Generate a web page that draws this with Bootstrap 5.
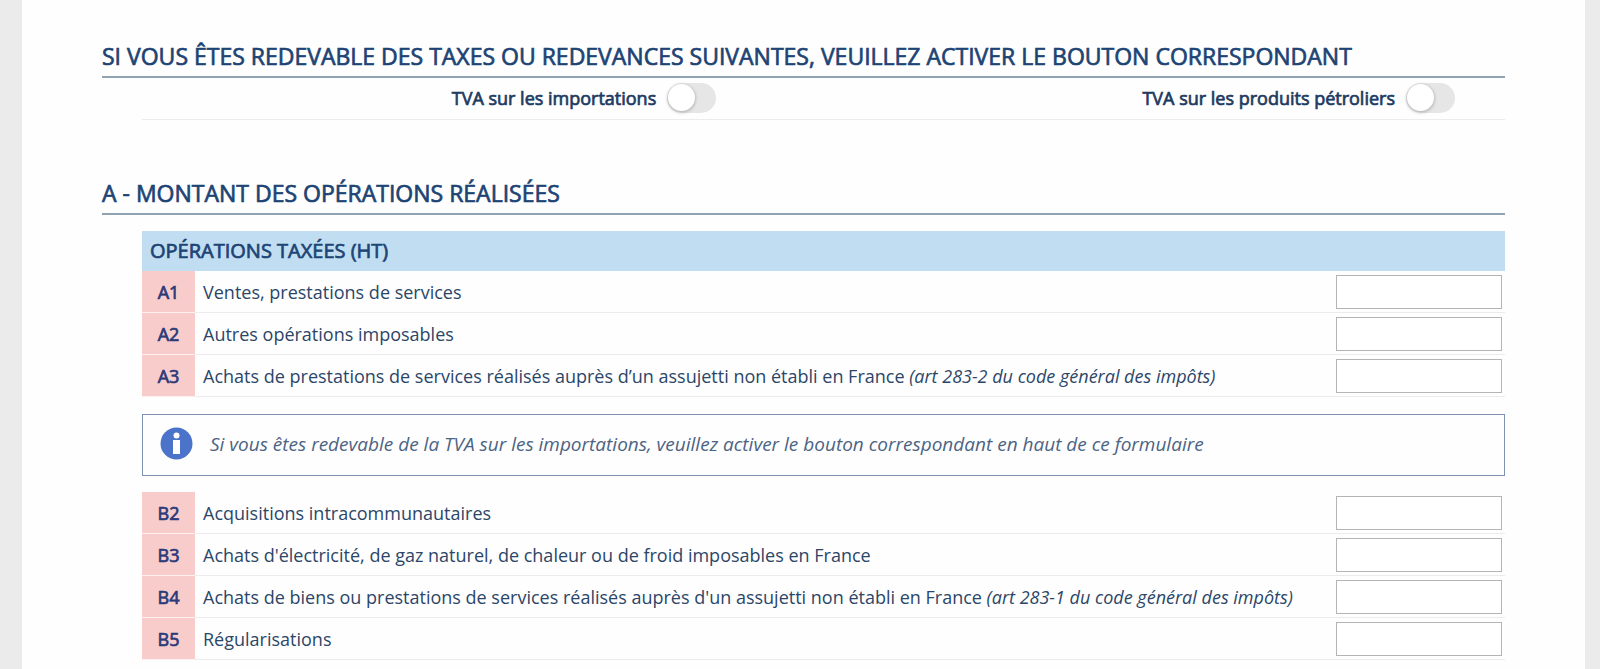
<!DOCTYPE html>
<html lang="fr">
<head>
<meta charset="utf-8">
<meta name="viewport" content="width=device-width, initial-scale=1">
<title>Déclaration de TVA</title>
<link href="https://cdn.jsdelivr.net/npm/bootstrap@5.3.0/dist/css/bootstrap.min.css" rel="stylesheet">
<style>
  body { background: #ebebeb; color: #2b4668; font-family: "Open Sans", sans-serif; font-size: 18px; line-height: 24px; }
  .sheet { background: #fefefe; margin: 0 15px 0 22px; padding: 38px 80px 8px; min-height: 100vh; }
  .faux-bold { font-weight: 400; -webkit-text-stroke: 0.7px currentColor; }
  .section-title { font-size: 23px; line-height: 36px; padding-bottom: 2px; margin: 0; border-bottom: 2px solid #8fa3b2; color: #1d4474; }
  .section-body { margin-left: 40px; }
  .toggles { height: 42px; border-bottom: 1px solid #ececec; margin-bottom: 55px; }
  .toggles > div { padding: 0 50px 2px 0; gap: 11px; }
  .toggle-first { width: 45.8%; }
  .toggles label { color: #1d3a60; }
  .toggles .form-check-input {
    width: 49px; height: 30px; margin: 0; border: 0; border-radius: 15px; background: #e6e6e6; appearance: none; position: relative; float: none;
  }
  .toggles .form-check-input::before {
    content: ""; position: absolute; left: 1px; top: 1px; width: 27px; height: 27px; border-radius: 50%; background: #fff; box-shadow: 0 1px 3px 1px rgba(0,0,0,.18);
  }
  .toggles .form-check-input:checked { background: #4a73c9; }
  .toggles .form-check-input:checked::before { left: 21px; }
  .lines { width: 100%; border-collapse: separate; border-spacing: 0; }
  .lines caption { caption-side: top; background: #c1ddf2; color: #1d4474; font-size: 20px; line-height: 40px; padding: 0 8px; }
  .lines th, .lines td { height: 42px; padding: 0; border-bottom: 1px solid #ebebeb; vertical-align: middle; }
  .lines th { width: 53px; background: #f9cccc; color: #2b3a78; text-align: center; border-bottom-color: #fdf0f0; }
  .lines td { padding-left: 8px; }
  .lines td:last-child { width: 177px; padding: 0 3px 0 8px; }
  .lines .form-control { height: 34px; border: 1px solid #b4b4b8; border-radius: 0; background: #fff; padding: 0 6px; text-align: right; color: inherit; }
  .notice { font-size: 19px; font-style: italic; border: 1px solid #7d93b0; padding: 0 17px 3px; min-height: 62px; gap: 17px; margin: 17px 0 16px; color: #4c6484; }
</style>
</head>
<body>
<main class="sheet">
  <form>
    <section>
      <h2 class="section-title faux-bold">SI VOUS ÊTES REDEVABLE DES TAXES OU REDEVANCES SUIVANTES, VEUILLEZ ACTIVER LE BOUTON CORRESPONDANT</h2>
      <div class="section-body toggles d-flex">
        <div class="toggle-first d-flex align-items-center justify-content-end">
          <label class="faux-bold" for="imp">TVA sur les importations</label>
          <input class="form-check-input" type="checkbox" role="switch" id="imp">
        </div>
        <div class="flex-grow-1 d-flex align-items-center justify-content-end">
          <label class="faux-bold" for="pet">TVA sur les produits pétroliers</label>
          <input class="form-check-input" type="checkbox" role="switch" id="pet">
        </div>
      </div>
    </section>

    <section>
      <h2 class="section-title faux-bold">A - MONTANT DES OPÉRATIONS RÉALISÉES</h2>
      <div class="section-body mt-3">
        <table class="lines">
          <caption class="faux-bold">OPÉRATIONS TAXÉES (HT)</caption>
          <tbody>
            <tr><th scope="row" class="faux-bold">A1</th><td><label for="a1">Ventes, prestations de services</label></td><td><input class="form-control" type="text" id="a1"></td></tr>
            <tr><th scope="row" class="faux-bold">A2</th><td><label for="a2">Autres opérations imposables</label></td><td><input class="form-control" type="text" id="a2"></td></tr>
            <tr><th scope="row" class="faux-bold">A3</th><td><label for="a3">Achats de prestations de services réalisés auprès d’un assujetti non établi en France <em>(art 283-2 du code général des impôts)</em></label></td><td><input class="form-control" type="text" id="a3"></td></tr>
          </tbody>
        </table>

        <div class="notice d-flex align-items-center">
          <svg class="flex-shrink-0" width="33" height="33" viewBox="0 0 33 33" aria-hidden="true">
            <circle cx="16.500" cy="16.500" r="16" fill="#4a73c9"/>
            <circle cx="16.500" cy="8.500" r="3" fill="#fff"/>
            <path d="M13 13h7v14h-7z" fill="#fff"/>
          </svg>
          <span>Si vous êtes redevable de la TVA sur les importations, veuillez activer le bouton correspondant en haut de ce formulaire</span>
        </div>

        <table class="lines">
          <tbody>
            <tr><th scope="row" class="faux-bold">B2</th><td><label for="b2">Acquisitions intracommunautaires</label></td><td><input class="form-control" type="text" id="b2"></td></tr>
            <tr><th scope="row" class="faux-bold">B3</th><td><label for="b3">Achats d'électricité, de gaz naturel, de chaleur ou de froid imposables en France</label></td><td><input class="form-control" type="text" id="b3"></td></tr>
            <tr><th scope="row" class="faux-bold">B4</th><td><label for="b4">Achats de biens ou prestations de services réalisés auprès d'un assujetti non établi en France <em>(art 283-1 du code général des impôts)</em></label></td><td><input class="form-control" type="text" id="b4"></td></tr>
            <tr><th scope="row" class="faux-bold">B5</th><td><label for="b5">Régularisations</label></td><td><input class="form-control" type="text" id="b5"></td></tr>
          </tbody>
        </table>
      </div>
    </section>
  </form>
</main>
<script src="https://cdn.jsdelivr.net/npm/bootstrap@5.3.0/dist/js/bootstrap.bundle.min.js"></script>
</body>
</html>
